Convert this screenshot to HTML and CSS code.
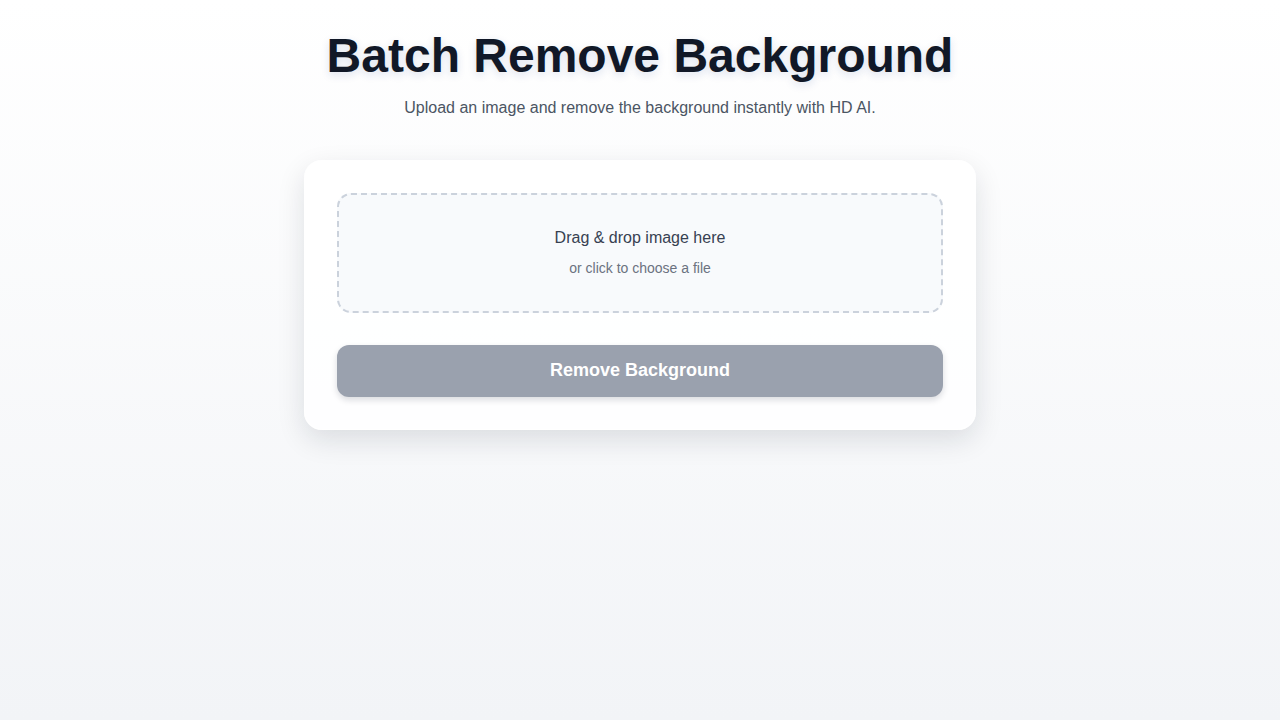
FILE: index.html
```html
<!DOCTYPE html>
<html lang="en">
<head>
<meta charset="utf-8">
<title>Batch Remove Background</title>
<link rel="stylesheet" href="styles.css">
</head>
<body>
<main class="page">
  <header class="hero">
    <h1 class="title">Batch Remove Background</h1>
    <p class="subtitle">Upload an image and remove the background instantly with HD AI.</p>
  </header>
  <section class="card">
    <div class="dropzone">
      <p class="drop-main">Drag &amp; drop image here</p>
      <p class="drop-sub">or click to choose a file</p>
    </div>
    <button class="btn" type="button">Remove Background</button>
  </section>
</main>
</body>
</html>
```

FILE: styles.css
```css
* { box-sizing: border-box; }
html, body { margin: 0; height: 100%; }
body {
  font-family: "Liberation Sans", Arial, sans-serif;
  background: linear-gradient(180deg, #ffffff 0%, #f2f4f7 100%);
  min-height: 720px;
}
.page {
  display: flex;
  flex-direction: column;
  align-items: center;
  padding-top: 30px;
}
.hero { text-align: center; }
.title {
  margin: 0;
  font-size: 48px;
  font-weight: 700;
  line-height: 1.1;
  color: #111827;
  text-shadow: 0 3px 8px rgba(30, 58, 138, 0.15);
}
.subtitle {
  margin: 16px 0 0;
  font-size: 16px;
  line-height: normal;
  color: #4b5563;
}
.card {
  margin-top: 43px;
  width: 672px;
  padding: 32px;
  background: rgba(255, 255, 255, 0.85);
  border: 1px solid rgba(255, 255, 255, 0.9);
  border-radius: 18px;
  box-shadow: 0 10px 28px rgba(15, 23, 42, 0.12);
  display: flex;
  flex-direction: column;
  gap: 32px;
}
.dropzone {
  height: 120px;
  border: 2px dashed #cbd2dc;
  border-radius: 14px;
  background: #f8fafc;
  display: flex;
  flex-direction: column;
  align-items: center;
  justify-content: center;
  gap: 13px;
}
.drop-main { margin: 0; font-size: 16px; color: #374151; }
.drop-sub { margin: 0; font-size: 14px; color: #6b7280; }
.btn {
  height: 52px;
  border: none;
  border-radius: 12px;
  background: #9aa1ae;
  color: #ffffff;
  font-family: "Liberation Sans", Arial, sans-serif;
  font-weight: 700;
  font-size: 18px;
  box-shadow: 0 3px 6px rgba(15, 23, 42, 0.15);
}
```
